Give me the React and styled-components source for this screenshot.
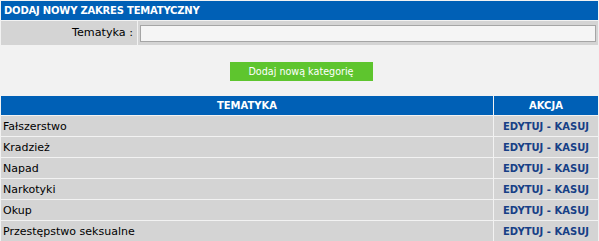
import { Fragment } from 'react'
import styled, { createGlobalStyle } from 'styled-components'

const GlobalStyle = createGlobalStyle`
  body {
    margin: 0;
    background: #f2f2f2;
    font-family: Tahoma, "DejaVu Sans", sans-serif;
  }
`

const Page = styled.div`
  width: 599px;
  height: 241px;
  overflow: hidden;
  background: #f2f2f2;
`

const Panel = styled.div`
  display: grid;
  grid-template-columns: 136px 1fr;
  gap: 1px;
  padding: 1px 1px 0 1px;
`

const TitleBar = styled.div`
  grid-column: 1 / -1;
  height: 19px;
  background: #0060b6;
  color: #ffffff;
  font-size: 10px;
  font-weight: bold;
  letter-spacing: -0.2px;
  line-height: 19px;
  padding-left: 3px;
`

const LabelCell = styled.div`
  height: 24px;
  background: #d4d4d4;
  color: #000000;
  font-size: 11.2px;
  line-height: 24px;
  text-align: right;
  padding-right: 4px;
`

const InputCell = styled.div`
  height: 24px;
  background: #d4d4d4;
  display: flex;
  align-items: center;
  padding: 0 2px;
`

const TextInput = styled.input`
  width: 100%;
  height: 17px;
  box-sizing: border-box;
  border: 1px solid #a5a5a5;
  background: #f5f5f5;
  margin: 0;
  padding: 0 2px;
  font-size: 11px;
`

const ButtonRow = styled.div`
  display: flex;
  justify-content: center;
  padding: 17px 0 15px 0;
`

const Button = styled.button`
  width: 143px;
  height: 19px;
  margin-left: 3px;
  border: none;
  background: #5ec52e;
  color: #ffffff;
  font-family: Tahoma, "DejaVu Sans", sans-serif;
  font-size: 9.6px;
  padding: 0;
`

const Table = styled.div`
  display: grid;
  grid-template-columns: 1fr 104px;
  gap: 1px;
  padding: 0 1px;
`

const HeadCell = styled.div`
  height: 19px;
  background: #0060b6;
  color: #ffffff;
  font-size: 10px;
  font-weight: bold;
  line-height: 19px;
  text-align: center;
`

const Cell = styled.div`
  height: 20px;
  background: #d4d4d4;
  line-height: 21px;
  overflow: hidden;
  padding-left: ${p => (p.$action ? 0 : 2)}px;
  text-align: ${p => (p.$action ? 'center' : 'left')};
  color: ${p => (p.$action ? '#173f86' : '#000000')};
  font-weight: ${p => (p.$action ? 'bold' : 'normal')};
  font-size: ${p => (p.$action ? 10 : 11)}px;
`

const ActionLink = styled.a`
  color: #173f86;
  text-decoration: none;
`

const topics = [
  'Fałszerstwo',
  'Kradzież',
  'Napad',
  'Narkotyki',
  'Okup',
  'Przestępstwo seksualne'
]

export default function App() {
  return (
    <Page>
      <GlobalStyle />
      <Panel>
        <TitleBar>DODAJ NOWY ZAKRES TEMATYCZNY</TitleBar>
        <LabelCell>Tematyka :</LabelCell>
        <InputCell>
          <TextInput type="text" />
        </InputCell>
      </Panel>
      <ButtonRow>
        <Button type="button">Dodaj nową kategorię</Button>
      </ButtonRow>
      <Table>
        <HeadCell>TEMATYKA</HeadCell>
        <HeadCell>AKCJA</HeadCell>
        {topics.map(t => (
          <Fragment key={t}>
            <Cell>{t}</Cell>
            <Cell $action>
              <ActionLink href="#">EDYTUJ</ActionLink> - <ActionLink href="#">KASUJ</ActionLink>
            </Cell>
          </Fragment>
        ))}
      </Table>
    </Page>
  )
}
